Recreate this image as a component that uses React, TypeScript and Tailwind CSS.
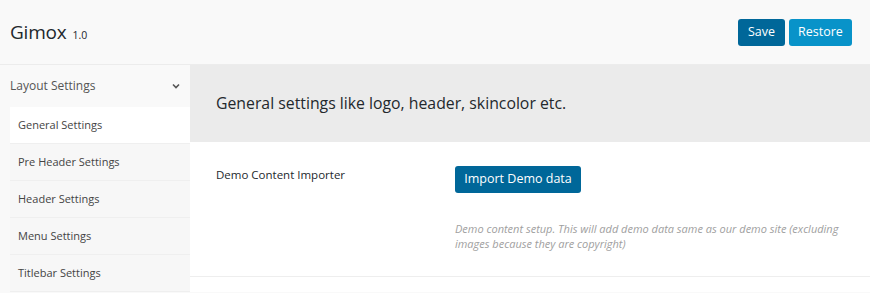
import React from "react";

const items = [
  "General Settings",
  "Pre Header Settings",
  "Header Settings",
  "Menu Settings",
  "Titlebar Settings",
];

export default function App() {
  return (
    <div
      className="w-[870px] h-[293px] overflow-hidden bg-[#f9f9f9] text-[#333]"
      style={{ fontFamily: '"Open Sans", "Noto Sans", sans-serif' }}
    >
      <div className="h-[65px] flex items-center justify-between pl-[10px] pr-[18px] border-b border-[#ececec]">
        <div className="flex items-baseline gap-[6px] mt-[1px]">
          <span className="text-[19px] tracking-[-0.2px] text-[#23282d]">Gimox</span>
          <span className="text-[10.5px] text-[#23282d]">1.0</span>
        </div>
        <div className="flex gap-[4px]">
          <button className="h-[27px] w-[47px] rounded-[3px] bg-[#006799] text-white text-[12.5px]">
            Save
          </button>
          <button className="h-[27px] w-[63px] rounded-[3px] bg-[#0893c9] text-white text-[12.5px]">
            Restore
          </button>
        </div>
      </div>
      <div className="flex">
        <div className="w-[190px] pl-[10px] shrink-0">
          <div className="h-[42px] flex items-center justify-between pr-[8px] text-[12px] text-[#555]">
            <span>Layout Settings</span>
            <svg width="10" height="10" viewBox="0 0 10 10" className="mr-[1px]">
              <path d="M2 3.5 L5 6.5 L8 3.5" stroke="#555" strokeWidth="1.6" fill="none" />
            </svg>
          </div>
          <div className="flex flex-col">
            {items.map((t, i) => (
              <div
                key={t}
                className={`h-[37px] flex items-center pl-[8px] text-[11px] text-[#444] border-b border-[#efefef] ${
                  i === 0 ? "bg-white" : "bg-[#f7f7f7]"
                }`}
              >
                {t}
              </div>
            ))}
          </div>
        </div>
        <div className="flex-1 bg-white">
          <div className="h-[77px] bg-[#ebebeb] flex items-center pl-[26px] text-[15.8px] text-[#23282d]">
            General settings like logo, header, skincolor etc.
          </div>
          <div className="flex pl-[26px] pt-[24px] pb-[25px] border-b border-[#eee]">
            <div className="w-[239px] text-[11.5px] text-[#23282d]">Demo Content Importer</div>
            <div className="flex flex-col">
              <button className="self-start h-[27px] w-[126px] rounded-[3px] bg-[#006799] text-white text-[12.5px]">
                Import Demo data
              </button>
              <p className="mt-[28px] w-[400px] text-[11px] italic text-[#a0a0a0] leading-[15px]">
                Demo content setup. This will add demo data same as our demo site (excluding images because they are copyright)
              </p>
            </div>
          </div>
        </div>
      </div>
    </div>
  );
}
